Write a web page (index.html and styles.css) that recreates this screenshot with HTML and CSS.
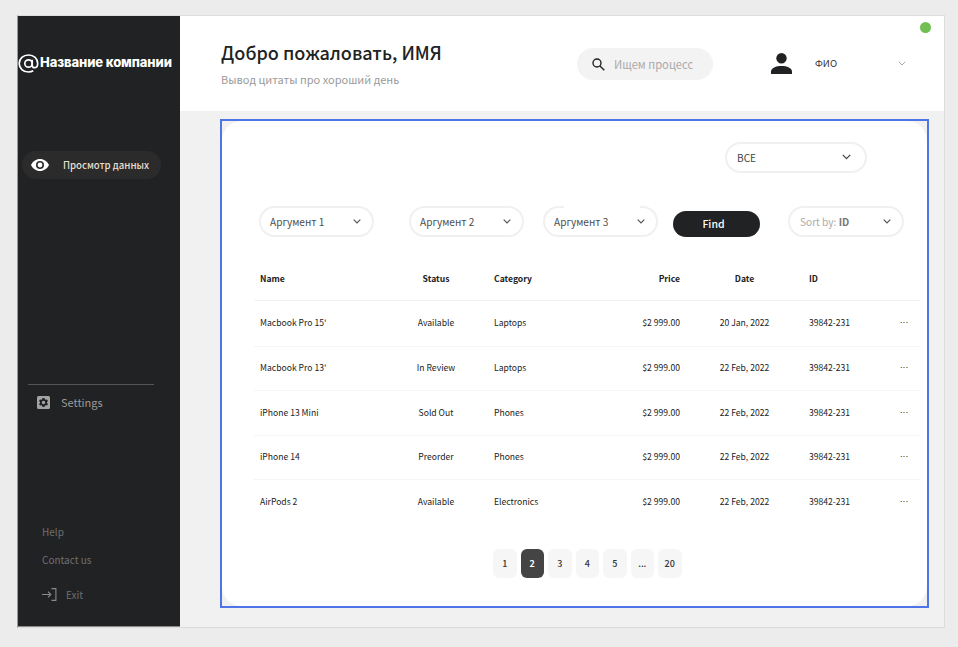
FILE: index.html
```html
<!DOCTYPE html>
<html lang="ru">
<head>
<meta charset="utf-8">
<title>Просмотр данных</title>
<link rel="stylesheet" href="styles.css">
</head>
<body>
<div class="frame">
  <aside class="sidebar">
    <div class="brand">
      <svg class="brand-icon" width="21" height="19" viewBox="0 0 21 19" fill="none" stroke="#fff" stroke-width="1.7"><circle cx="10.5" cy="9.5" r="3.7"/><path d="M14.2 5.8v5.4c0 1.600 1 2.500 2.300 2.500 1.900 0 3.200-1.700 3.200-4.200C19.700 4.500 15.800 1 10.500 1 5.200 1 1.200 4.800 1.200 9.500S5.200 18 10.500 18c1.700 0 3.400-.4 4.700-1.200"/></svg>
      <span class="brand-name">Название компании</span>
    </div>
    <a class="nav-pill">
      <svg width="18" height="12" viewBox="0 0 18 12"><path fill="#fff" fill-rule="evenodd" d="M9 0C5 0 1.700 2.400 0 6c1.700 3.600 5 6 9 6s7.300-2.400 9-6c-1.700-3.600-5-6-9-6zm0 10a4 4 0 1 1 0-8 4 4 0 0 1 0 8zm0-6.400a2.400 2.400 0 1 0 0 4.800 2.400 2.400 0 0 0 0-4.800z"/></svg>
      <span>Просмотр данных</span>
    </a>
    <div class="side-bottom">
      <div class="settings">
        <svg width="13" height="13" viewBox="0 0 13 13"><path fill="#a3a3a3" fill-rule="evenodd" d="M1.500 0h10A1.500 1.500 0 0 1 13 1.500v10a1.500 1.500 0 0 1-1.500 1.500h-10A1.500 1.500 0 0 1 0 11.500v-10A1.500 1.500 0 0 1 1.500 0zM5.500 2l-.3 1.300-.9.500L3 3.400 2 5.100l1 .9v1l-1 .9 1 1.700 1.300-.4.900.5.3 1.300h2l.3-1.300.9-.5 1.300.4 1-1.700-1-.9V6l1-.9-1-1.700-1.300.4-.9-.5L7.500 2zm1 2.800a1.700 1.700 0 1 1 0 3.400 1.700 1.700 0 0 1 0-3.400z"/></svg>
        <span>Settings</span>
      </div>
      <div class="side-links">
        <a class="side-link">Help</a>
        <a class="side-link">Contact us</a>
        <a class="side-exit">
          <svg width="15" height="13" viewBox="0 0 15 13" fill="none" stroke="#8a8a8a" stroke-width="1.100"><path d="M0 6.500h8.500M6 3.700l2.800 2.800L6 9.300M9.500.6h4.400v11.800H9.500"/></svg>
          <span>Exit</span>
        </a>
      </div>
    </div>
  </aside>
  <div class="main">
    <header class="topbar">
      <div class="greeting">
        <h1>Добро пожаловать, ИМЯ</h1>
        <p>Вывод цитаты про хороший день</p>
      </div>
      <div class="search">
        <svg width="13" height="13" viewBox="0 0 13 13" fill="none" stroke="#222" stroke-width="1.400"><circle cx="5" cy="5" r="4"/><path d="M8 8l4.300 4.300"/></svg>
        <span>Ищем процесс</span>
      </div>
      <div class="user">
        <svg width="21" height="21" viewBox="0 0 21 21"><circle cx="10.500" cy="5.300" r="5.200" fill="#212223"/><path fill="#212223" d="M0 21v-2.500C0 15 5 13 10.500 13S21 15 21 18.500V21z"/></svg>
        <span class="user-name">ФИО</span>
        <svg class="user-chevron" width="8" height="5" viewBox="0 0 8 5" fill="none" stroke="#aaa" stroke-width="1"><path d="M.7.700L4 4l3.300-3.300"/></svg>
      </div>
      <i class="status-dot"></i>
    </header>
    <section class="content">
      <div class="card">
        <div class="all-row">
          <div class="select select-all"><span>ВСЕ</span><svg width="9" height="6" viewBox="0 0 9 6" fill="none" stroke="#444" stroke-width="1.300"><path d="M.8.900L4.500 4.600 8.200.900"/></svg></div>
        </div>
        <div class="filters">
          <div class="select"><span>Аргумент 1</span><svg width="8" height="5" viewBox="0 0 8 5" fill="none" stroke="#555" stroke-width="1.200"><path d="M.7.700L4 4l3.300-3.300"/></svg></div>
          <div class="select"><span>Аргумент 2</span><svg width="8" height="5" viewBox="0 0 8 5" fill="none" stroke="#555" stroke-width="1.200"><path d="M.7.700L4 4l3.300-3.300"/></svg></div>
          <div class="select select-cut"><span>Аргумент 3</span><svg width="8" height="5" viewBox="0 0 8 5" fill="none" stroke="#555" stroke-width="1.200"><path d="M.7.700L4 4l3.300-3.300"/></svg></div>
          <button class="find">Find</button>
          <div class="select select-sort"><span><em>Sort by:</em> ID</span><svg width="8" height="5" viewBox="0 0 8 5" fill="none" stroke="#555" stroke-width="1.200"><path d="M.7.700L4 4l3.300-3.300"/></svg></div>
        </div>
        <div class="table">
          <div class="row head"><b class="c-name">Name</b><b class="c-status">Status</b><b class="c-cat">Category</b><b class="c-price">Price</b><b class="c-date">Date</b><b class="c-id">ID</b><b></b></div>
          <div class="row"><span class="c-name">Macbook Pro 15'</span><span class="c-status">Available</span><span class="c-cat">Laptops</span><span class="c-price">$2 999.00</span><span class="c-date">20 Jan, 2022</span><span class="c-id">39842-231</span><span class="c-more">···</span></div>
          <div class="row"><span class="c-name">Macbook Pro 13'</span><span class="c-status">In Review</span><span class="c-cat">Laptops</span><span class="c-price">$2 999.00</span><span class="c-date">22 Feb, 2022</span><span class="c-id">39842-231</span><span class="c-more">···</span></div>
          <div class="row"><span class="c-name">iPhone 13 Mini</span><span class="c-status">Sold Out</span><span class="c-cat">Phones</span><span class="c-price">$2 999.00</span><span class="c-date">22 Feb, 2022</span><span class="c-id">39842-231</span><span class="c-more">···</span></div>
          <div class="row"><span class="c-name">iPhone 14</span><span class="c-status">Preorder</span><span class="c-cat">Phones</span><span class="c-price">$2 999.00</span><span class="c-date">22 Feb, 2022</span><span class="c-id">39842-231</span><span class="c-more">···</span></div>
          <div class="row"><span class="c-name">AirPods 2</span><span class="c-status">Available</span><span class="c-cat">Electronics</span><span class="c-price">$2 999.00</span><span class="c-date">22 Feb, 2022</span><span class="c-id">39842-231</span><span class="c-more">···</span></div>
        </div>
        <nav class="pager">
          <a>1</a><a class="active">2</a><a>3</a><a>4</a><a>5</a><a>...</a><a>20</a>
        </nav>
      </div>
    </section>
  </div>
</div>
</body>
</html>
```
FILE: styles.css
```css
* { box-sizing: border-box; }
html, body { height: 100%; }
body {
  margin: 0;
  background: #ececec;
  font-family: "Noto Sans CJK SC", "Noto Sans", sans-serif;
  color: #212223;
  overflow: hidden;
}
.frame {
  display: flex;
  width: 928px;
  height: 613px;
  margin: 15px 0 0 17px;
  border: 1px solid #dcdcdc;
  border-left-color: #9a9a9a;
}
.sidebar {
  flex: 0 0 162px;
  background: #212223;
  display: flex;
  flex-direction: column;
  padding-top: 38px;
  border-bottom: 1px solid #8c8c8c;
}
.brand { display: flex; align-items: center; height: 19px; gap: 1px; }
.brand-icon { flex: none; }
.brand-name {
  font-family: Inter, "Noto Sans", sans-serif;
  font-weight: 800;
  font-size: 13px;
  line-height: 17px;
  margin-top: -2px;
  color: #fff;
  white-space: nowrap;
  letter-spacing: -0.1px;
}
.nav-pill {
  display: flex;
  align-items: center;
  height: 28px;
  width: 139px;
  margin: 78px 0 0 4px;
  padding-left: 9px;
  border-radius: 14px;
  background: #2b2b2c;
  color: #e6dfce;
  font-size: 9.600px;
  font-weight: 500;
}
.nav-pill span { margin-left: 14px; }
.side-bottom { margin-top: 205px; }
.settings {
  display: flex;
  align-items: center;
  gap: 11px;
  margin-left: 10px;
  width: 126px;
  padding: 9px 0 0 9px;
  border-top: 1px solid #555;
  color: #9a9a9a;
  font-size: 11px;
  line-height: 16px;
}
.side-links { display: flex; flex-direction: column; margin: 114px 0 0 24px; color: #6f6f6f; font-size: 10px; }
.side-link { height: 28px; line-height: 16px; }
.side-exit { display: flex; align-items: center; gap: 9px; margin-top: 6px; height: 16px; }
.main { flex: 1; display: flex; flex-direction: column; min-width: 0; background: #f1f1f1; }
.topbar {
  position: relative;
  flex: 0 0 95px;
  display: flex;
  background: #fff;
  padding-left: 41px;
}
.greeting { width: 356px; padding-top: 24px; }
.greeting h1 { margin: 0; font-size: 18px; font-weight: 500; line-height: 24px; color: #212223; }
.greeting p { margin: 7px 0 0; font-size: 11px; line-height: 16px; color: #9a9a9a; }
.search {
  display: flex;
  align-items: center;
  gap: 9px;
  width: 136px;
  height: 32px;
  margin-top: 32px;
  padding-left: 15px;
  border-radius: 16px;
  background: #f3f3f3;
  color: #aaa;
  font-size: 11.200px;
}
.user { display: flex; align-items: center; height: 32px; margin: 31px 0 0 58px; width: 135px; }
.user-name { margin-left: 23px; font-size: 9.600px; color: #333; }
.user-chevron { margin-left: auto; }
.status-dot {
  position: absolute;
  top: 6px;
  right: 13px;
  width: 11px;
  height: 11px;
  border-radius: 50%;
  background: #70bf50;
}
.content { flex: 1; padding: 8px 15px 19px 40px; }
.card {
  height: 100%;
  border: 2px solid #4f74e8;
  background: #f1f1f1;
  position: relative;
  overflow: hidden;
}
.card::before {
  content: "";
  position: absolute;
  inset: 0;
  background: #fff;
  border-radius: 20px;
}
.card > * { position: relative; }
.all-row { display: flex; padding: 21px 0 0 503px; height: 85px; }
.select {
  display: flex;
  align-items: center;
  justify-content: space-between;
  width: 115px;
  height: 31px;
  padding: 0 11px 1px 9px;
  border: 2px solid #f0f0f0;
  border-radius: 16px;
  background: #fff;
  color: #4d4d4d;
  font-size: 10.100px;
}
.select-all { width: 142px; padding: 0 14px 1px 10px; color: #444; }
.filters { display: flex; align-items: flex-start; padding-left: 37px; height: 31px; }
.select + .select { margin-left: 35px; }
.select-cut { position: relative; margin-left: 19px !important; }
.select-cut::after {
  content: "";
  position: absolute;
  top: -3px;
  left: 19px;
  right: 16px;
  height: 3px;
  background: #fff;
}
.find {
  width: 87px;
  height: 26px;
  margin: 5px 0 0 15px;
  border: 0;
  border-radius: 13px;
  background: #212223;
  color: #fff;
  font: 500 10.500px "Noto Sans CJK SC", sans-serif;
  padding: 0 6px 2px 0;
}
.select-sort { width: 116px; margin-left: 28px; padding-left: 10px; font-weight: 700; color: #777; }
.select-sort em { font-style: normal; font-weight: 400; color: #aaa; }
.table { margin: 25px 0 0 32px; width: 666px; font-size: 8.600px; color: #222; }
.row {
  display: grid;
  grid-template-columns: 150px 64px 132px 80px 129px 81px 30px;
  align-items: center;
  height: 44.500px;
  padding-bottom: 2px;
}
.row.head { height: 39px; border-bottom: 1px solid #f2f2f2; padding-bottom: 7px; }
.row b { font-weight: 700; color: #212223; }
.c-name { padding-left: 6px; }
.c-status { text-align: center; }
.c-cat { padding-left: 26px; }
.c-price { text-align: right; }
.c-date { text-align: center; }
.c-more { font-family: "Liberation Sans", sans-serif; text-align: center; padding-right: 2px; color: #111; }
.row + .row + .row { border-top: 1px solid #f5f5f5; }
.pager { display: flex; gap: 4px; margin: 25px 0 0 271px; }
.pager a {
  flex: 0 0 23.500px;
  height: 29px;
  border-radius: 6px;
  background: #f6f6f6;
  color: #333;
  font-size: 9px;
  font-weight: 500;
  line-height: 29px;
  text-align: center;
}
.pager a.active { background: #444; color: #fff; font-weight: 700; }
```
